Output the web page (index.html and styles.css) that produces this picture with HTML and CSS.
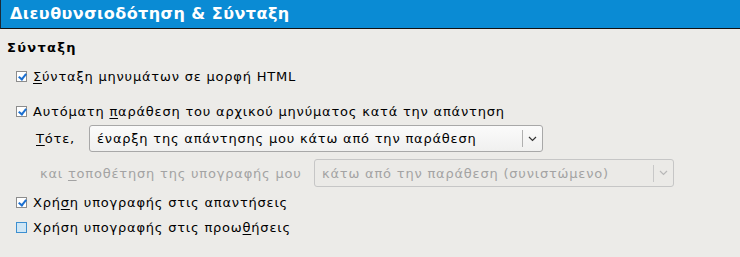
FILE: index.html
```html
<!DOCTYPE html>
<html lang="el">
<head>
    <meta charset="UTF-8">
    <title>Διευθυνσιοδότηση &amp; Σύνταξη</title>
    <link rel="stylesheet" href="styles.css">
</head>
<body>
    <div class="header">Διευθυνσιοδότηση &amp; Σύνταξη</div>

    <div class="section">
        <div class="section-title">Σύνταξη</div>

        <label class="check row-html">
            <span class="box checked"></span>
            <span><u>Σ</u>ύνταξη μηνυμάτων σε μορφή HTML</span>
        </label>

        <label class="check row-quote">
            <span class="box checked"></span>
            <span>Αυτόματη <u>π</u>αράθεση του αρχικού μηνύματος κατά την απάντηση</span>
        </label>

        <div class="combo-row row-then">
            <span class="combo-label"><u>Τ</u>ότε,</span>
            <div class="combo combo-reply">
                <span class="combo-text">έναρξη της απάντησης μου κάτω από την παράθεση</span>
                <span class="combo-arrow"><svg width="9" height="6" viewBox="0 0 9 6"><path d="M1 1 L4.5 4.5 L8 1" fill="none" stroke="#333" stroke-width="1.2"/></svg></span>
            </div>
        </div>

        <div class="combo-row row-sig disabled">
            <span class="combo-label">και <u>τ</u>οποθέτηση της υπογραφής μου</span>
            <div class="combo combo-sig">
                <span class="combo-text">κάτω από την παράθεση (συνιστώμενο)</span>
                <span class="combo-arrow"><svg width="9" height="6" viewBox="0 0 9 6"><path d="M1 1 L4.5 4.5 L8 1" fill="none" stroke="#b8b8b8" stroke-width="1.2"/></svg></span>
            </div>
        </div>

        <label class="check row-reply">
            <span class="box checked"></span>
            <span>Χρή<u>σ</u>η υπογραφής στις απαντήσεις</span>
        </label>

        <label class="check row-forward">
            <span class="box hover"></span>
            <span>Χρήση υπογραφής στις προω<u>θ</u>ήσεις</span>
        </label>
    </div>
</body>
</html>
```

FILE: styles.css
```css
* {
    margin: 0;
    padding: 0;
    box-sizing: border-box;
}

body {
    background-color: #ecebe8;
    color: #000;
    font-family: 'DejaVu Sans', 'Noto Sans', sans-serif;
    font-size: 13px;
    letter-spacing: 0.8px;
    width: 740px;
    height: 257px;
    overflow: hidden;
}

u {
    text-decoration: underline;
    text-underline-offset: 2px;
}

.header {
    height: 29px;
    background: #0a8bd4;
    border-left: 1px solid #1a2a38;
    border-bottom: 1px solid #111;
    color: #fff;
    font-size: 16px;
    font-weight: bold;
    letter-spacing: 0.45px;
    line-height: 28px;
    padding-left: 9px;
}

.section {
    display: flex;
    flex-direction: column;
    padding-left: 7px;
}

.section-title {
    font-weight: bold;
    letter-spacing: 1.3px;
    height: 20px;
    line-height: 20px;
    margin-top: 9px;
}

.check {
    display: flex;
    align-items: center;
    gap: 6px;
    height: 20px;
    padding-left: 9px;
}

.row-html { margin-top: 8px; }
.row-quote { margin-top: 15px; }
.row-reply { margin-top: 5px; }
.row-forward { margin-top: 5px; }

.box {
    width: 11px;
    height: 11px;
    border: 1px solid #8c8c8c;
    background: #fff;
    position: relative;
    flex: none;
}

.box.checked::after {
    content: "";
    position: absolute;
    left: 3px;
    top: 0px;
    width: 3px;
    height: 6px;
    border-right: 2px solid #1a6fd0;
    border-bottom: 2px solid #1a6fd0;
    transform: rotate(38deg);
}

.box.hover {
    border-color: #3c8fd0;
    background: #cfe6f5;
}

.combo-row {
    display: flex;
    align-items: center;
}

.row-then {
    margin-top: 4px;
    padding-left: 29px;
}

.row-then .combo-label {
    width: 53px;
}

.row-sig {
    margin-top: 7px;
    padding-left: 33px;
}

.row-sig .combo-label {
    width: 274px;
    white-space: nowrap;
}

.disabled {
    color: #a3a3a3;
}

.combo {
    display: flex;
    align-items: center;
    border: 1px solid #a8a8a8;
    border-radius: 3px;
    background: linear-gradient(#fbfbfb, #f0f0ef);
}

.combo-reply {
    width: 454px;
    height: 27px;
}

.combo-sig {
    width: 360px;
    height: 28px;
    border-color: #c6c6c6;
    background: #ebeae7;
}

.combo-text {
    flex: 1;
    padding-left: 7px;
    white-space: nowrap;
}

.combo-arrow {
    width: 20px;
    height: 17px;
    border-left: 1px solid #b0b0b0;
    display: flex;
    align-items: center;
    justify-content: center;
}

.combo-sig .combo-arrow {
    border-left-color: #c8c8c8;
}
```
